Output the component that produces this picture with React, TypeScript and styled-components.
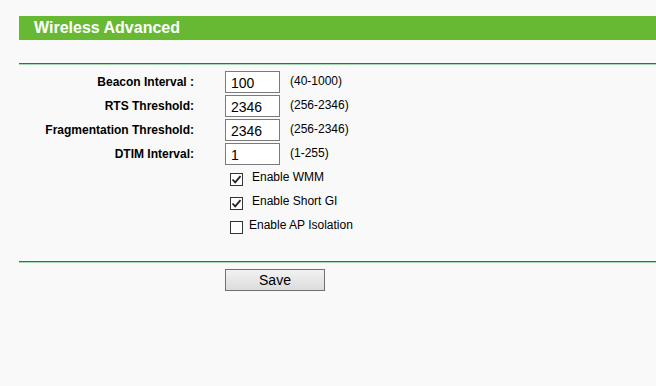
import React from 'react';
import styled, { createGlobalStyle } from 'styled-components';

const GlobalStyle = createGlobalStyle`
  html, body {
    margin: 0;
    padding: 0;
    background: #f9f9f9;
  }
  body {
    font-family: "Liberation Sans", Arial, sans-serif;
    color: #000;
  }
`;

const Page = styled.div`
  width: 656px;
  height: 386px;
  padding: 16px 0 0 19px;
  box-sizing: border-box;
  background: #f9f9f9;
  overflow: hidden;
`;

const TitleBar = styled.div`
  height: 24px;
  line-height: 24px;
  background: #67b934;
  color: #fff;
  font-size: 16px;
  font-weight: bold;
  padding-left: 15px;
`;

const Divider = styled.div<{ $top: number }>`
  margin-top: ${(p) => p.$top}px;
  height: 1px;
  background: #1f7d46;
  border-bottom: 1px solid #a9d8b6;
`;

const Form = styled.div`
  padding-top: 5px;
  display: flex;
  flex-direction: column;
`;

const FieldRow = styled.div`
  display: flex;
  align-items: center;
  height: 24px;
`;

const Label = styled.div`
  width: 175px;
  text-align: right;
  font-size: 12px;
  font-weight: bold;
`;

const TextInput = styled.input`
  box-sizing: border-box;
  width: 55px;
  height: 22px;
  margin: 0 0 0 31px;
  padding: 2px 5px 0;
  border: 1px solid #7b7b7b;
  background: #fff;
  font-family: "Liberation Sans", Arial, sans-serif;
  font-size: 14px;
  color: #000;
  outline: none;
`;

const Range = styled.span`
  margin-left: 10px;
  margin-bottom: 3px;
  font-size: 12px;
`;

const CheckList = styled.div`
  margin-top: 1px;
  padding-left: 211px;
  display: flex;
  flex-direction: column;
`;

const CheckRow = styled.label`
  display: flex;
  align-items: center;
  height: 24px;
`;

const Box = styled.span`
  box-sizing: border-box;
  width: 13px;
  height: 13px;
  border: 1px solid #333;
  background: #fff;
  display: flex;
  align-items: center;
  justify-content: center;
`;

const CheckText = styled.span<{ $gap: number }>`
  margin-left: ${(p) => p.$gap}px;
  margin-bottom: 4px;
  font-size: 12px;
`;

const ButtonRow = styled.div`
  padding: 6px 0 0 206px;
`;

const SaveButton = styled.button`
  width: 100px;
  height: 22px;
  border: 1px solid #707070;
  background: linear-gradient(#f2f2f2, #dcdcdc);
  font-family: "Liberation Sans", Arial, sans-serif;
  font-size: 14px;
  color: #000;
  padding: 0;
`;

const fields = [
  { label: 'Beacon Interval :', value: '100', range: '(40-1000)' },
  { label: 'RTS Threshold:', value: '2346', range: '(256-2346)' },
  { label: 'Fragmentation Threshold:', value: '2346', range: '(256-2346)' },
  { label: 'DTIM Interval:', value: '1', range: '(1-255)' },
];

const options = [
  { label: 'Enable WMM', checked: true, gap: 9 },
  { label: 'Enable Short GI', checked: true, gap: 9 },
  { label: 'Enable AP Isolation', checked: false, gap: 6 },
];

const Check = ({ checked }: { checked: boolean }) => (
  <Box>
    {checked && (
      <svg width="11" height="11" viewBox="0 0 11 11">
        <path d="M1.5 5.5 L4.2 8.3 L9.5 2.2" fill="none" stroke="#222" strokeWidth="1.8" />
      </svg>
    )}
  </Box>
);

export default function App() {
  return (
    <Page>
      <GlobalStyle />
      <TitleBar>Wireless Advanced</TitleBar>
      <Divider $top={23} />
      <Form>
        {fields.map((f) => (
          <FieldRow key={f.label}>
            <Label>{f.label}</Label>
            <TextInput defaultValue={f.value} />
            <Range>{f.range}</Range>
          </FieldRow>
        ))}
      </Form>
      <CheckList>
        {options.map((o) => (
          <CheckRow key={o.label}>
            <Check checked={o.checked} />
            <CheckText $gap={o.gap}>{o.label}</CheckText>
          </CheckRow>
        ))}
      </CheckList>
      <Divider $top={22} />
      <ButtonRow>
        <SaveButton>Save</SaveButton>
      </ButtonRow>
    </Page>
  );
}
